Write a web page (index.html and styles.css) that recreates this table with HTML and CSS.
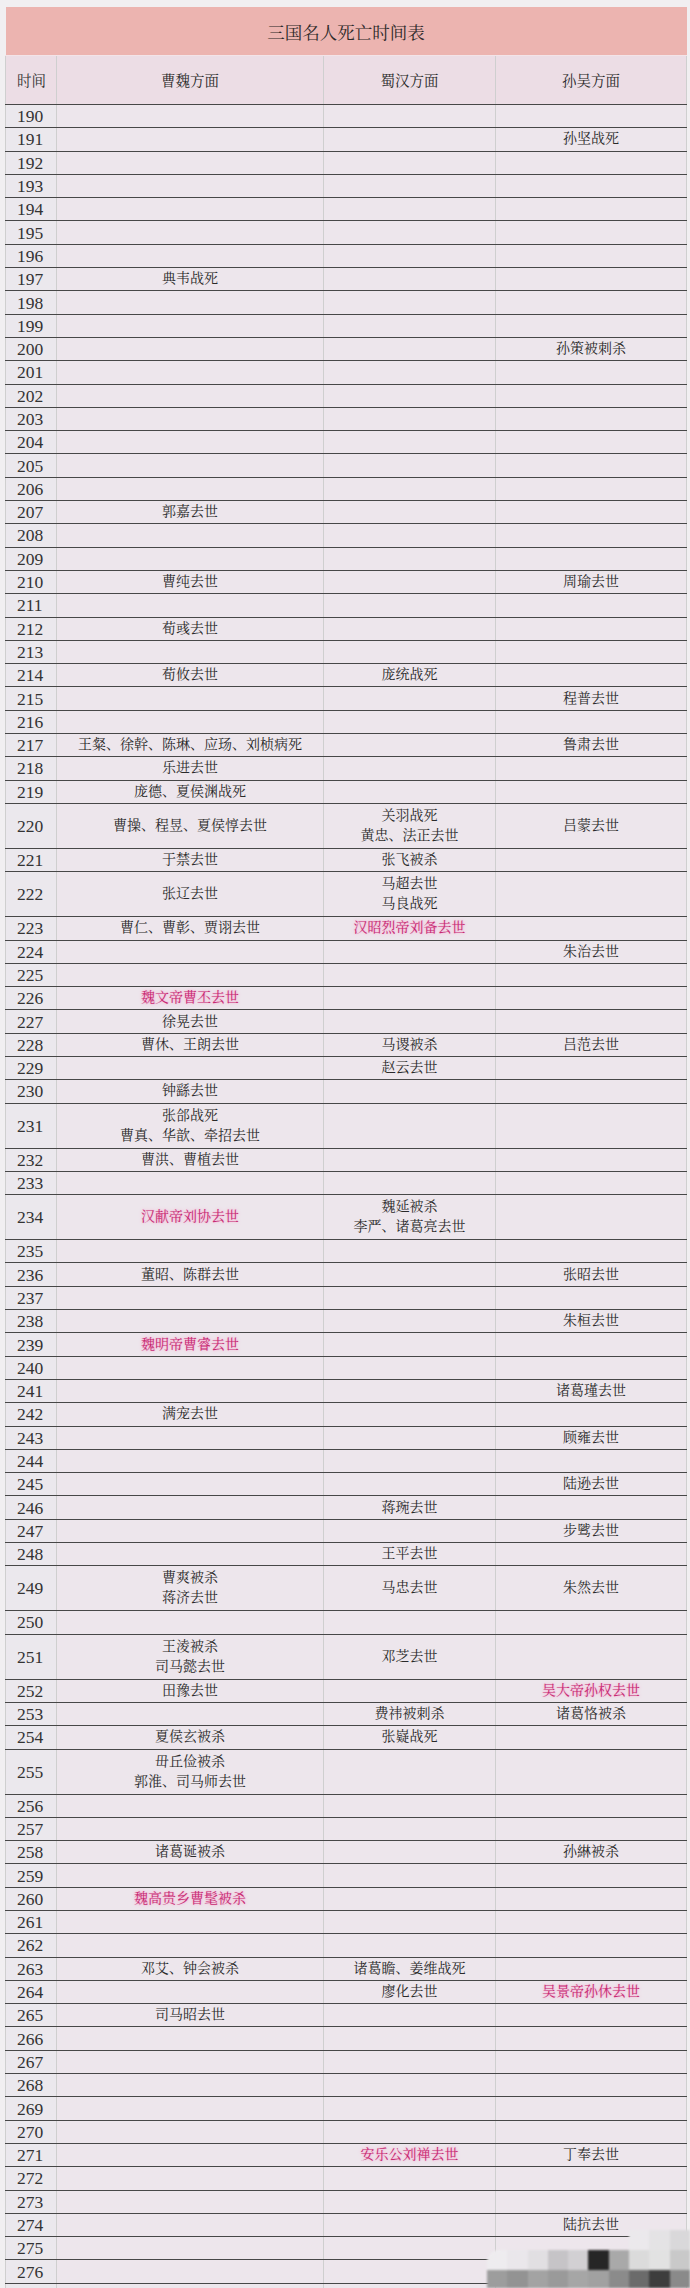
FILE: index.html
```html
<!DOCTYPE html>
<html lang="zh-CN">
<head>
<meta charset="utf-8">
<title>三国名人死亡时间表</title>
<link rel="stylesheet" href="styles.css">
</head>
<body>
<div class="page">
<table class="sheet">
<colgroup><col class="c-t"><col class="c-w"><col class="c-s"><col class="c-u"></colgroup>
<thead>
<tr class="title"><td colspan="4">三国名人死亡时间表</td></tr>
<tr class="head"><td class="t">时间</td><td class="w">曹魏方面</td><td>蜀汉方面</td><td>孙吴方面</td></tr>
</thead>
<tbody>
<tr><td class="t">190</td><td class="w"></td><td></td><td></td></tr>
<tr><td class="t">191</td><td class="w"></td><td></td><td>孙坚战死</td></tr>
<tr><td class="t">192</td><td class="w"></td><td></td><td></td></tr>
<tr><td class="t">193</td><td class="w"></td><td></td><td></td></tr>
<tr><td class="t">194</td><td class="w"></td><td></td><td></td></tr>
<tr><td class="t">195</td><td class="w"></td><td></td><td></td></tr>
<tr><td class="t">196</td><td class="w"></td><td></td><td></td></tr>
<tr><td class="t">197</td><td class="w">典韦战死</td><td></td><td></td></tr>
<tr><td class="t">198</td><td class="w"></td><td></td><td></td></tr>
<tr><td class="t">199</td><td class="w"></td><td></td><td></td></tr>
<tr><td class="t">200</td><td class="w"></td><td></td><td>孙策被刺杀</td></tr>
<tr><td class="t">201</td><td class="w"></td><td></td><td></td></tr>
<tr><td class="t">202</td><td class="w"></td><td></td><td></td></tr>
<tr><td class="t">203</td><td class="w"></td><td></td><td></td></tr>
<tr><td class="t">204</td><td class="w"></td><td></td><td></td></tr>
<tr><td class="t">205</td><td class="w"></td><td></td><td></td></tr>
<tr><td class="t">206</td><td class="w"></td><td></td><td></td></tr>
<tr><td class="t">207</td><td class="w">郭嘉去世</td><td></td><td></td></tr>
<tr><td class="t">208</td><td class="w"></td><td></td><td></td></tr>
<tr><td class="t">209</td><td class="w"></td><td></td><td></td></tr>
<tr><td class="t">210</td><td class="w">曹纯去世</td><td></td><td>周瑜去世</td></tr>
<tr><td class="t">211</td><td class="w"></td><td></td><td></td></tr>
<tr><td class="t">212</td><td class="w">荀彧去世</td><td></td><td></td></tr>
<tr><td class="t">213</td><td class="w"></td><td></td><td></td></tr>
<tr><td class="t">214</td><td class="w">荀攸去世</td><td>庞统战死</td><td></td></tr>
<tr><td class="t">215</td><td class="w"></td><td></td><td>程普去世</td></tr>
<tr><td class="t">216</td><td class="w"></td><td></td><td></td></tr>
<tr><td class="t">217</td><td class="w">王粲、徐幹、陈琳、应玚、刘桢病死</td><td></td><td>鲁肃去世</td></tr>
<tr><td class="t">218</td><td class="w">乐进去世</td><td></td><td></td></tr>
<tr><td class="t">219</td><td class="w">庞德、夏侯渊战死</td><td></td><td></td></tr>
<tr class="d"><td class="t">220</td><td class="w">曹操、程昱、夏侯惇去世</td><td>关羽战死<br>黄忠、法正去世</td><td>吕蒙去世</td></tr>
<tr><td class="t">221</td><td class="w">于禁去世</td><td>张飞被杀</td><td></td></tr>
<tr class="d"><td class="t">222</td><td class="w">张辽去世</td><td>马超去世<br>马良战死</td><td></td></tr>
<tr><td class="t">223</td><td class="w">曹仁、曹彰、贾诩去世</td><td><span class="red">汉昭烈帝刘备去世</span></td><td></td></tr>
<tr><td class="t">224</td><td class="w"></td><td></td><td>朱治去世</td></tr>
<tr><td class="t">225</td><td class="w"></td><td></td><td></td></tr>
<tr><td class="t">226</td><td class="w"><span class="red">魏文帝曹丕去世</span></td><td></td><td></td></tr>
<tr><td class="t">227</td><td class="w">徐晃去世</td><td></td><td></td></tr>
<tr><td class="t">228</td><td class="w">曹休、王朗去世</td><td>马谡被杀</td><td>吕范去世</td></tr>
<tr><td class="t">229</td><td class="w"></td><td>赵云去世</td><td></td></tr>
<tr><td class="t">230</td><td class="w">钟繇去世</td><td></td><td></td></tr>
<tr class="d"><td class="t">231</td><td class="w">张郃战死<br>曹真、华歆、牵招去世</td><td></td><td></td></tr>
<tr><td class="t">232</td><td class="w">曹洪、曹植去世</td><td></td><td></td></tr>
<tr><td class="t">233</td><td class="w"></td><td></td><td></td></tr>
<tr class="d"><td class="t">234</td><td class="w"><span class="red">汉献帝刘协去世</span></td><td>魏延被杀<br>李严、诸葛亮去世</td><td></td></tr>
<tr><td class="t">235</td><td class="w"></td><td></td><td></td></tr>
<tr><td class="t">236</td><td class="w">董昭、陈群去世</td><td></td><td>张昭去世</td></tr>
<tr><td class="t">237</td><td class="w"></td><td></td><td></td></tr>
<tr><td class="t">238</td><td class="w"></td><td></td><td>朱桓去世</td></tr>
<tr><td class="t">239</td><td class="w"><span class="red">魏明帝曹睿去世</span></td><td></td><td></td></tr>
<tr><td class="t">240</td><td class="w"></td><td></td><td></td></tr>
<tr><td class="t">241</td><td class="w"></td><td></td><td>诸葛瑾去世</td></tr>
<tr><td class="t">242</td><td class="w">满宠去世</td><td></td><td></td></tr>
<tr><td class="t">243</td><td class="w"></td><td></td><td>顾雍去世</td></tr>
<tr><td class="t">244</td><td class="w"></td><td></td><td></td></tr>
<tr><td class="t">245</td><td class="w"></td><td></td><td>陆逊去世</td></tr>
<tr><td class="t">246</td><td class="w"></td><td>蒋琬去世</td><td></td></tr>
<tr><td class="t">247</td><td class="w"></td><td></td><td>步骘去世</td></tr>
<tr><td class="t">248</td><td class="w"></td><td>王平去世</td><td></td></tr>
<tr class="d"><td class="t">249</td><td class="w">曹爽被杀<br>蒋济去世</td><td>马忠去世</td><td>朱然去世</td></tr>
<tr><td class="t">250</td><td class="w"></td><td></td><td></td></tr>
<tr class="d"><td class="t">251</td><td class="w">王淩被杀<br>司马懿去世</td><td>邓芝去世</td><td></td></tr>
<tr><td class="t">252</td><td class="w">田豫去世</td><td></td><td><span class="red">吴大帝孙权去世</span></td></tr>
<tr><td class="t">253</td><td class="w"></td><td>费祎被刺杀</td><td>诸葛恪被杀</td></tr>
<tr><td class="t">254</td><td class="w">夏侯玄被杀</td><td>张嶷战死</td><td></td></tr>
<tr class="d"><td class="t">255</td><td class="w">毌丘俭被杀<br>郭淮、司马师去世</td><td></td><td></td></tr>
<tr><td class="t">256</td><td class="w"></td><td></td><td></td></tr>
<tr><td class="t">257</td><td class="w"></td><td></td><td></td></tr>
<tr><td class="t">258</td><td class="w">诸葛诞被杀</td><td></td><td>孙綝被杀</td></tr>
<tr><td class="t">259</td><td class="w"></td><td></td><td></td></tr>
<tr><td class="t">260</td><td class="w"><span class="red">魏高贵乡曹髦被杀</span></td><td></td><td></td></tr>
<tr><td class="t">261</td><td class="w"></td><td></td><td></td></tr>
<tr><td class="t">262</td><td class="w"></td><td></td><td></td></tr>
<tr><td class="t">263</td><td class="w">邓艾、钟会被杀</td><td>诸葛瞻、姜维战死</td><td></td></tr>
<tr><td class="t">264</td><td class="w"></td><td>廖化去世</td><td><span class="red">吴景帝孙休去世</span></td></tr>
<tr><td class="t">265</td><td class="w">司马昭去世</td><td></td><td></td></tr>
<tr><td class="t">266</td><td class="w"></td><td></td><td></td></tr>
<tr><td class="t">267</td><td class="w"></td><td></td><td></td></tr>
<tr><td class="t">268</td><td class="w"></td><td></td><td></td></tr>
<tr><td class="t">269</td><td class="w"></td><td></td><td></td></tr>
<tr><td class="t">270</td><td class="w"></td><td></td><td></td></tr>
<tr><td class="t">271</td><td class="w"></td><td><span class="red">安乐公刘禅去世</span></td><td>丁奉去世</td></tr>
<tr><td class="t">272</td><td class="w"></td><td></td><td></td></tr>
<tr><td class="t">273</td><td class="w"></td><td></td><td></td></tr>
<tr><td class="t">274</td><td class="w"></td><td></td><td>陆抗去世</td></tr>
<tr><td class="t">275</td><td class="w"></td><td></td><td></td></tr>
<tr><td class="t">276</td><td class="w"></td><td></td><td></td></tr>
<tr><td class="t">277</td><td class="w"></td><td></td><td></td></tr>
<tr><td class="t">278</td><td class="w"></td><td></td><td></td></tr>
</tbody>
</table>
<div class="mosaic" aria-hidden="true">
<span></span><span></span><span></span><span></span><span></span><span></span><span></span><span class="a7"></span><span class="a8"></span><span class="a9"></span>
<span class="b0"></span><span class="b1"></span><span class="b2"></span><span class="b3"></span><span class="b4"></span><span class="b5"></span><span class="b6"></span><span class="b7"></span><span class="b8"></span><span class="b9"></span>
<span class="c0"></span><span class="c1"></span><span class="c2"></span><span class="c3"></span><span class="c4"></span><span class="c5"></span><span class="c6"></span><span class="c7"></span><span class="c8"></span><span class="c9"></span>
</div>
</div>
</body>
</html>
```
FILE: styles.css
```css
html, body {
  margin: 0;
  padding: 0;
  background: #f1eff1;
}

.page {
  position: relative;
  height: 2288px;
  overflow: hidden;
  padding: 7px 4px 0 5px;
  box-sizing: border-box;
}

.sheet {
  width: 681px;
  border-collapse: collapse;
  table-layout: fixed;
  font-family: "Liberation Serif", "Noto Serif CJK SC", "Noto Sans CJK SC", serif;
  color: #2a2a2a;
}

.c-t { width: 51px; }
.c-w { width: 267px; }
.c-s { width: 172px; }
.c-u { width: 191px; }

.sheet td {
  padding: 0;
  text-align: center;
  vertical-align: middle;
  font-size: 14px;
  line-height: 20px;
  background: #ede6ec;
  border-bottom: 1px solid #474747;
  border-left: 1px solid #3a3a3a;
  border-right: 1px solid #cfcfcf;
}

.sheet tbody tr { height: 23.3px; }
.sheet tbody tr.d { height: 45px; }

.sheet td.t {
  text-align: left;
  padding-left: 11px;
  font-size: 17.5px;
  line-height: 18px;
  color: #333;
  background: #ebe8ed;
  border-left: 1px solid #cfcfcf;
}

.sheet td.w { border-left: 1px solid #d2d0d4; }

.title td {
  height: 45px;
  background: #ecb4b0;
  font-size: 17.5px;
  color: #2e2a2a;
  padding-top: 3px;
  border: none;
  border-bottom: 1px solid #f3e4e8;
}

.head td {
  height: 46px;
  background: #ecdde5;
  font-size: 14.5px;
  padding-top: 2px;
}

.sheet .head td.t { font-size: 14.5px; line-height: 20px; padding-left: 11px; background: #ecdde5; }

.red {
  color: #c62a73;
  text-shadow: 0 0 2px #f5a3ca, 0 0 4px #f7bcd8;
}

.mosaic {
  position: absolute;
  right: 0;
  bottom: 0;
  width: 203px;
  height: 58px;
  display: grid;
  grid-template-columns: repeat(10, 1fr);
  grid-template-rows: 20px 20px 18px;
  filter: blur(1.2px);
}

.mosaic .a7 { background: #ebe9ec; }
.mosaic .a8 { background: #e4e3e5; }
.mosaic .a9 { background: #d9d8da; }

.mosaic .b0 { background: #eeecef; border-top-left-radius: 12px; }
.mosaic .b1 { background: #eae7eb; }
.mosaic .b2 { background: #e1dfe2; }
.mosaic .b3 { background: #c6c4c7; }
.mosaic .b4 { background: #d2d0d3; }
.mosaic .b5 { background: #262626; }
.mosaic .b6 { background: #a9a9a9; }
.mosaic .b7 { background: #dbdbdb; }
.mosaic .b8 { background: #e2e2e2; }
.mosaic .b9 { background: #c9c9c9; }

.mosaic .c0 { background: #9d9d9d; }
.mosaic .c1 { background: #939393; }
.mosaic .c2 { background: #a3a3a3; }
.mosaic .c3 { background: #9a9a9a; }
.mosaic .c4 { background: #a6a6a6; }
.mosaic .c5 { background: #a1a1a1; }
.mosaic .c6 { background: #8b8b8b; }
.mosaic .c7 { background: #6b6b6b; }
.mosaic .c8 { background: #3d3d3d; }
.mosaic .c9 { background: #8a8a8a; }
```
